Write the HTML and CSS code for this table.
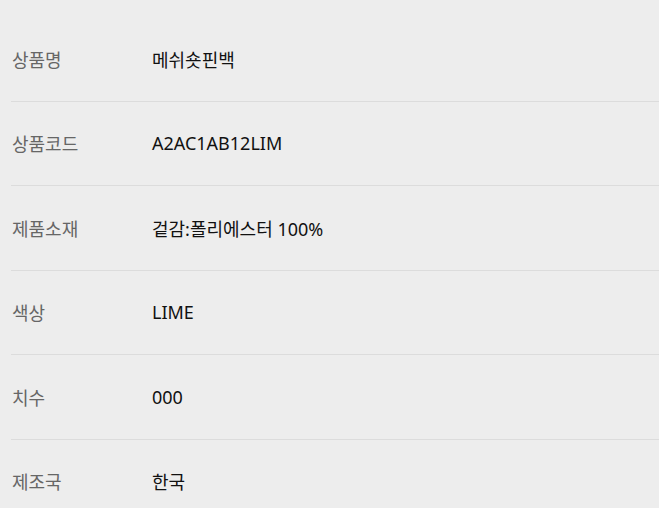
FILE: index.html
```html
<!DOCTYPE html>
<html lang="ko">
<head>
<meta charset="utf-8">
<link rel="stylesheet" href="styles.css">
</head>
<body>
<div class="spec">
  <div class="row"><div class="label">상품명</div><div class="value">메쉬숏핀백</div></div>
  <div class="row"><div class="label">상품코드</div><div class="value">A2AC1AB12LIM</div></div>
  <div class="row"><div class="label">제품소재</div><div class="value">겉감:폴리에스터 100%</div></div>
  <div class="row"><div class="label">색상</div><div class="value">LIME</div></div>
  <div class="row"><div class="label">치수</div><div class="value">000</div></div>
  <div class="row"><div class="label">제조국</div><div class="value">한국</div></div>
</div>
</body>
</html>
```

FILE: styles.css
```css
html, body {
  margin: 0;
  padding: 0;
  background: #ededed;
}
body {
  font-family: "Noto Sans", "Noto Sans CJK KR", sans-serif;
  font-size: 18px;
  overflow: hidden;
}
.spec {
  padding: 17px 0 0 11px;
}
.row {
  display: flex;
  align-items: center;
  height: 84.5px;
  box-sizing: border-box;
  border-bottom: 1px solid #dcdcdc;
}
.label {
  width: 141px;
  padding-left: 1px;
  box-sizing: border-box;
  color: #666;
}
.value {
  color: #111;
}
```
